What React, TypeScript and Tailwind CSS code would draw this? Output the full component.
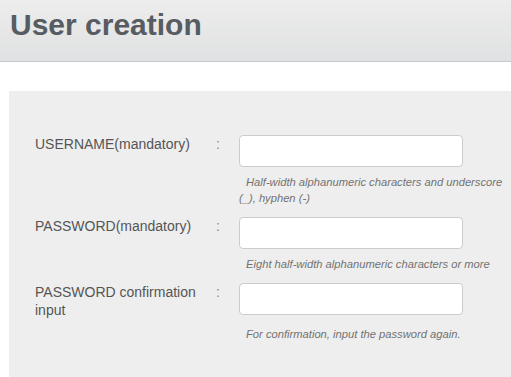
import React from "react";

type Field = { label: React.ReactNode; hint: string; type: string };

const fields: Field[] = [
  {
    label: "USERNAME(mandatory)",
    hint: "Half-width alphanumeric characters and underscore (_), hyphen (-)",
    type: "text",
  },
  {
    label: "PASSWORD(mandatory)",
    hint: "Eight half-width alphanumeric characters or more",
    type: "password",
  },
  {
    label: "PASSWORD confirmation input",
    hint: "For confirmation, input the password again.",
    type: "password",
  },
];

export default function App() {
  return (
    <div
      className="w-[511px] h-[377px] overflow-hidden bg-white"
      style={{ fontFamily: '"Liberation Sans", Arial, sans-serif' }}
    >
      <header className="h-[62px] border-b border-[#c9c9c9] bg-gradient-to-b from-[#ededed] to-[#e0e1e2] pl-[10px] pt-[7px]">
        <h1 className="text-[30px] leading-[36px] font-bold text-[#575c63]">User creation</h1>
      </header>
      <div className="mt-[29px] ml-[9px] h-[300px] bg-[#eeeeee] pt-[44px] pl-[26px] pr-[6px]">
        {fields.map((f, i) => (
          <div key={i} className="mb-[11px]">
            <div className="flex items-start">
              <label className="w-[181px] shrink-0 pr-[20px] text-[14px] leading-[18px] text-[#555555]">
                {f.label}
              </label>
              <span className="w-[23px] shrink-0 text-[14px] leading-[18px] text-[#888888]">:</span>
              <input
                type={f.type}
                className="w-[224px] h-[32px] rounded-[4px] border border-[#cccccc] bg-white px-2 outline-none"
              />
            </div>
            <div className="flex mt-[7px]">
              <div className="w-[204px] shrink-0" />
              <p className="flex-1 indent-[7px] text-[11.2px] leading-[16px] italic text-[#727272]">
                {f.hint}
              </p>
            </div>
          </div>
        ))}
      </div>
    </div>
  );
}
